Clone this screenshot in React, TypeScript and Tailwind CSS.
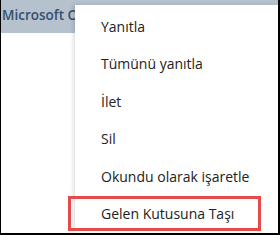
const items = ['Yanıtla', 'Tümünü yanıtla', 'İlet', 'Sil', 'Okundu olarak işaretle', 'Gelen Kutusuna Taşı'];

export default function App() {
  return (
    <div
      className="relative w-[280px] h-[235px] overflow-hidden bg-white border-l border-r-2 border-b-2 border-black"
      style={{ fontFamily: '"Segoe UI", "Open Sans", "Noto Sans", sans-serif' }}
    >
      <div className="h-[33px] bg-[#b6c1ce] pl-[1px] pt-[5px]">
        <div className="w-[73px] overflow-hidden whitespace-nowrap text-[13.5px] font-semibold text-[#34506f]">
          Microsoft Outlook
        </div>
      </div>

      <div className="absolute left-[74px] top-[5px] right-0 bottom-0 bg-white shadow-[-2px_0_4px_rgba(0,0,0,0.12)] pt-[3px]">
        {items.map((label) => (
          <div key={label} className="h-[37.4px] leading-[37px] pl-[26px] text-[14px] text-[#222222] whitespace-nowrap">
            {label}
          </div>
        ))}
      </div>

      <div className="absolute left-[67px] top-[196px] w-[193px] h-[35px] border-[3px] border-[#e64a4a]" />
    </div>
  );
}
